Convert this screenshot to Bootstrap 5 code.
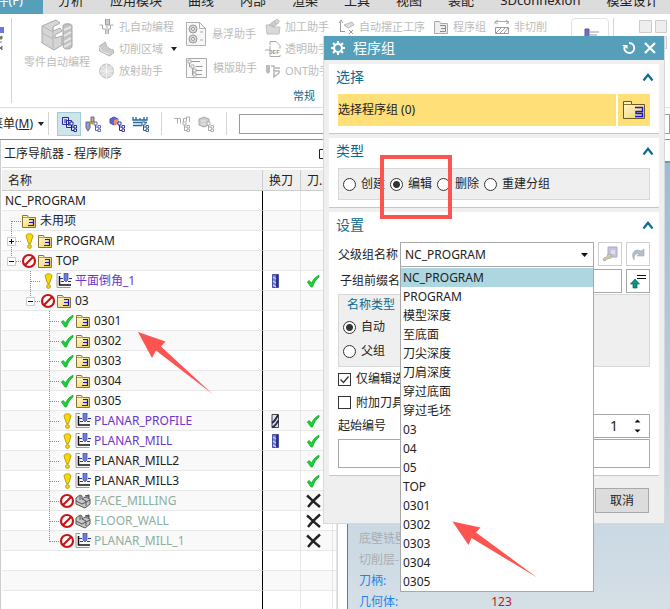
<!DOCTYPE html>
<html lang="zh-CN">
<head>
<meta charset="utf-8">
<meta name="viewport" content="width=device-width, initial-scale=1">
<title>程序组</title>
<link href="https://cdn.jsdelivr.net/npm/bootstrap@5.3.0/dist/css/bootstrap.min.css" rel="stylesheet">
<style>
body{font:12px/20px "Noto Sans","Noto Sans CJK SC",sans-serif;color:#222;background:#fff;height:100vh;overflow:hidden}
svg{display:block;flex:none}
button,input,select{font:inherit;color:inherit}
.tabs{height:14px;background:#dcdcdc;font-size:13px;overflow:hidden}
.tabs a{color:#222;text-decoration:none;line-height:18px;margin-top:-9px;flex:none}
.tabs .file-tab{width:43px;height:24px;background:#559fba;color:#fff;padding-right:20px;text-align:right;overflow:hidden;white-space:nowrap;direction:rtl}
.tabs .tab-set{gap:26px;padding-left:15px}
.ribbon{height:94px;border-bottom:1px solid #dcdcdc;font-size:11px;color:#bbb;overflow:hidden}
.ribbon button,.tools button{background:none;border:0;padding:0;display:flex;align-items:center;white-space:nowrap;flex:none}
.ribbon .rcol{flex:none;display:flex;flex-direction:column;padding-top:2px}
.ribbon .rcol button{height:22px;gap:4px}
.ribbon .rcol.tall{padding-top:3px}
.ribbon .rcol.tall button{height:34px;gap:6px}
.vline{width:1px;background:#d5d5d5;flex:none}
.grp-name{color:#0b6388;line-height:16px;padding:6px 0 0 28px}
.tools{height:32px;border-bottom:1px solid #8a8f92;overflow:hidden}
.tools .menu-btn{width:44px;justify-content:flex-end;gap:5px}
.tools .tb{width:24px;height:24px;justify-content:center}
.tools .tb.on{background:#cde6ec;border:1px solid #a3ccd6}
.tools input{height:20px;border:1px solid #999;flex:1;min-width:0}
.navigator{width:338px;flex:none;border-left:1px solid #ccc;border-right:1px solid #d5d5d5;overflow:hidden;padding-left:1px}
.nav-title{height:28px;line-height:30px;padding-left:2px;padding-right:8px;border-bottom:1px solid #d5d5d5;margin-bottom:2px}
.tree{width:100%;table-layout:fixed;border-collapse:separate;border-spacing:0;line-height:19px}
.tree th{font-weight:400;background:#efefef;height:21px;border-bottom:1px solid #ccc;border-right:1px solid #ccc;padding:0 6px;white-space:nowrap;overflow:hidden}
.tree td{height:20px;padding:0;border-bottom:1px solid #e8e8e8;border-right:1px solid #e5e5e5;white-space:nowrap;overflow:hidden}
.tree td:first-child{border-right:1px solid #000}
.tree tbody tr:nth-child(even) td{background:#f9f9f9}
.tree .cell{display:flex;align-items:center;height:19px}
.tree .cell span{padding-left:3px}
.tree td>svg{margin-left:4px}
.purple{color:#6a35c9}.muted-op{color:#8cae9d}
.view{border-left:1px solid #777;border-top:2px solid #559fba;margin:21px 0 0 9px;background:linear-gradient(#99bcd8,#d5dfe6);padding:365px 0 0 11px;line-height:21px;overflow:hidden}
.view .dim{color:#a9adb0}.view .blue{color:#1f83ee}.view .red{color:#c01524;padding-left:93px}
.dlg{position:absolute;left:323px;right:5px;top:36px;background:#efefef;border:1px solid #d8d8d8;border-top:0;z-index:2}
.dlg-head{height:24px;background:#559fba;color:#fff;font-size:14px;padding:0 8px 0 7px;gap:8px}
.dlg-head button{background:none;border:0;padding:0}
.sect{background:#fff;margin:4px 5px 0;padding:0 9px 7px;border-bottom:1px solid #c6c6c6}
.sect-title{height:30px;color:#0b6a90;font-size:14px;line-height:20px;margin:0 -5px 0 -2px;padding:0 1px 5px 0}
.pick{background:#ffdf77;height:32px;line-height:32px;flex:1;border:0;padding:0;text-align:left}
.pick-btn{background:#ffdf77;border:0;width:32px;padding:0;display:flex;align-items:center;justify-content:center}
.box{background:#efefef;border:1px solid #d8d8d8}
.dlg label{white-space:nowrap;display:flex;align-items:center;gap:5px}
.dlg input[type=radio]{appearance:none;width:13px;height:13px;margin:0;border:1px solid #333;border-radius:50%;background:#fff;flex:none}
.dlg input[type=radio]:checked{background:radial-gradient(circle,#333 0 3px,#fff 4px)}
.dlg input[type=checkbox]{appearance:none;width:13px;height:13px;margin:0;border:1px solid #333;background:#fff;flex:none}
.dlg input[type=checkbox]:checked{background:#fff url("data:image/svg+xml,%3Csvg xmlns='http://www.w3.org/2000/svg' viewBox='0 0 11 11'%3E%3Cpath d='M1.5 5.5l3 3 5-6' fill='none' stroke='%23333' stroke-width='1.3'/%3E%3C/svg%3E")}
.field{border:1px solid #a8a8a8;background:#fff;padding:0 4px;border-radius:0;min-width:0}
select.field{appearance:none;height:25px;width:194px;background:#fff url("data:image/svg+xml,%3Csvg xmlns='http://www.w3.org/2000/svg' width='7' height='4'%3E%3Cpath d='M0 0h7L3.5 4z' fill='%23111'/%3E%3C/svg%3E") no-repeat right 5px center}
.sq{width:24px;height:24px;padding:0;background:#fff;border:1px solid #d0d0d0;display:flex;align-items:center;justify-content:center;flex:none}
.field-label{width:62px;flex:none}
.clip-label{width:62px;overflow:hidden}
.popup{position:absolute;left:62px;top:24px;width:194px;background:#fff;border:1px solid #a8a8a8;padding:1px 0 0;margin:0;list-style:none;z-index:3}
.popup li{height:19px;line-height:19px;padding-left:2px}
.popup .active{background:#aed6e0}
.dlg-foot{padding:12px 15px 10px}
.dlg-foot button{width:54px;height:25px;background:#dcdcdc;border:1px solid #a8a8a8;padding:0}
.annot{position:absolute;z-index:5;pointer-events:none}
.mark-box{left:380px;top:155px;width:72px;height:64px;border:4px solid #fd5451}
.arrow-a{left:138px;top:332px}.arrow-b{left:452px;top:521px}
</style>
<script src="https://cdn.jsdelivr.net/npm/bootstrap@5.3.0/dist/js/bootstrap.bundle.min.js"></script>
</head>
<body class="d-flex flex-column position-relative">
<svg width="0" height="0" class="position-absolute" aria-hidden="true">
<defs><linearGradient id="gold" x1="0" y1="0" x2="1" y2="1"><stop offset="0" stop-color="#fffbe0"/><stop offset="1" stop-color="#edcf55"/></linearGradient></defs>
<symbol id="folder" viewBox="0 0 16 16"><path d="M1.5 14.500V2.500h5l1 2h7v10z" fill="url(#gold)" stroke="#8a7430"/><path d="M2 4.500h6" stroke="#b8a050"/><path d="M8 6.500h4.500v3H9m3.500 0v3H7M8 9.500h4" fill="none" stroke="#1414d8" stroke-width="1.200"/></symbol>
<symbol id="folderbig" viewBox="0 0 22 18"><path d="M.5 17.500V.5h8v3h13v14z" fill="url(#gold)" stroke="#6a5a20"/><path d="M1 3.500h8" stroke="#8a7430"/><path d="M12 6.500h7.500v4H13v2h6.500v3H12" fill="none" stroke="#1414e8" stroke-width="1.400"/></symbol>
<symbol id="folderg" viewBox="0 0 16 16"><path d="M1.500 14.500V2.500h5l1 2h7v10z" fill="#eee" stroke="#aaa"/><path d="M7 6.500h5.500v6H7M8 9.500h4.500" fill="none" stroke="#888"/></symbol>
<symbol id="excl" viewBox="0 0 16 16"><path d="M5 3c0-3 7-3 7 0L9.500 10.500h-2z" fill="#f5d90a" stroke="#a88b00" stroke-width=".8"/><circle cx="8.500" cy="13.500" r="1.900" fill="#f5d90a" stroke="#a88b00" stroke-width=".8"/></symbol>
<symbol id="stop" viewBox="0 0 16 16"><circle cx="8" cy="8" r="6" fill="#fff" stroke="#c81414" stroke-width="2.200"/><path d="M4 12l8-8" stroke="#c81414" stroke-width="2.200"/></symbol>
<symbol id="check" viewBox="0 0 16 16"><path d="M2.300 9l2-1.500L6.500 10C8.500 6 11 3.500 14 2.300V4C11 6.500 9 9.500 7.500 14H6z" fill="#12d633" stroke="#129a28" stroke-width=".7"/></symbol>
<symbol id="cross" viewBox="0 0 16 16"><path d="M2 2.500C6 6 10 10 15 14M15 1.500C10 6 6 10 3 14" fill="none" stroke="#222" stroke-width="2.400"/></symbol>
<symbol id="op" viewBox="0 0 16 16"><path d="M5 .5H1v14h13.500" fill="none" stroke="#999"/><path d="M3.500 3v9h11.500" fill="none" stroke="#111" stroke-width="1.500"/><path d="M8 0h4v7l-2 2-2-2z" fill="#6f7fd8" stroke="#2b3590" stroke-width=".6"/><path d="M4 5.500h3m6 0h3M5 8.500h3m4 0h3" stroke="#2030c0"/></symbol>
<symbol id="mill" viewBox="0 0 16 16"><path d="M1 5l4-3 2 1v3l3-2 5 2v5l-5 4-9-4z" fill="#c8c8c8" stroke="#555"/><path d="M1 8l6 3 8-4M7 6l4 2v5M5 3v4" fill="none" stroke="#555"/><path d="M10 3l4-1v3" fill="#777" stroke="#444"/></symbol>
<symbol id="tool" viewBox="0 0 16 16"><path d="M5.500 1.500h6v13h-6z" fill="#6f7ddd" stroke="#4a50a0"/><path d="M10 2v12" stroke="#2a2f80" stroke-width="2"/><path d="M6 4l3 2M6 8l3 2M6 12l3 2" stroke="#c8cef8" stroke-width="1.200"/></symbol>
<symbol id="tool2" viewBox="0 0 16 16"><path d="M5 1.500h6.500v13H5z" fill="#dfe3f2" stroke="#444"/><path d="M5 10c3-2 4-4 6-8M5 14.500c2-1 5-4 6-7" fill="none" stroke="#222845" stroke-width="1.800"/></symbol>
<symbol id="gf" viewBox="0 0 19 20"><path d="M9.500 10v10M10 10.500h9" stroke="#888" stroke-dasharray="1 1"/></symbol>
<symbol id="gt" viewBox="0 0 19 20"><path d="M9.500 0v20M10 10.500h9" stroke="#888" stroke-dasharray="1 1"/></symbol>
<symbol id="gl" viewBox="0 0 19 20"><path d="M9.500 0v11M10 10.500h9" stroke="#888" stroke-dasharray="1 1"/></symbol>
<symbol id="gp" viewBox="0 0 19 20"><path d="M9.500 0v20M14 10.500h5" stroke="#888" stroke-dasharray="1 1"/><path d="M5.500 6.500h8v8h-8z" fill="#fff" stroke="#ccc"/><path d="M7 10.500h5M9.500 8v5" stroke="#111"/></symbol>
<symbol id="gm" viewBox="0 0 19 20"><path d="M9.500 0v6M14 10.500h5" stroke="#888" stroke-dasharray="1 1"/><path d="M5.500 6.500h8v8h-8z" fill="#fff" stroke="#ccc"/><path d="M7 10.500h5" stroke="#111"/></symbol>
<symbol id="up" viewBox="0 0 12 8"><path d="M1.500 7.500L6 1.800l4.500 5.700" fill="none" stroke="#0b6a90" stroke-width="2.200"/></symbol>
<symbol id="subtree" viewBox="0 0 16 16"><path d="M10.500 8v6.500h3M10.500 11h3" fill="none" stroke="currentColor"/><path d="M9 6h3v3H9zM13 9.500h2.500V12H13zM13 13h2.500v2.500H13z" fill="#fff" stroke="currentColor" stroke-width=".9"/></symbol>
</svg>

<nav class="tabs d-flex flex-shrink-0">
<a href="#" class="file-tab">文件(F)&lrm;</a>
<div class="tab-set d-flex"><a href="#">分析</a><a href="#">应用模块</a><a href="#">曲线</a><a href="#">内部</a><a href="#">渲染</a><a href="#">工具</a><a href="#">视图</a><a href="#">装配</a><a href="#">3Dconnexion</a><a href="#">模型设计</a></div>
</nav>

<div class="ribbon d-flex flex-shrink-0">
<svg width="7" height="34" class="mt-2" viewBox="0 0 7 34"><path d="M0 5h4v6H0z" fill="#6878e0"/><path d="M0 15l2-1v3H0zM0 20h2M0 26l2-2v4z" stroke="#777" fill="#777"/></svg>
<div class="vline ms-1 my-1 me-2"></div>
<button class="flex-column ms-1 pt-1 align-self-start"><svg width="34" height="34" viewBox="0 0 34 34"><path d="M2 8L16 2l4 3-7 4v4l7-3 2 3-7 4v3l7-2v9l-8 5L2 25z" fill="#d5d5d5" stroke="#aaa"/><path d="M2 8l11 6M2 15l11 6M13 10v20" stroke="#b5b5b5"/><path d="M23 8c0-3 9-3 9 0v20c0 4-9 4-9 0z" fill="#c2c2c2" stroke="#a5a5a5"/><path d="M24 12l7-3M24 18l7-4M24 24l7-4M24 29l7-4" stroke="#e8e8e8" stroke-width="2"/></svg><span>零件自动编程</span></button>
<div class="rcol ms-2">
<button><svg width="17" height="16" viewBox="0 0 16 16"><path d="M7 0h4v6H7z" fill="#ccc" stroke="#999"/><path d="M1 6h3v4h3v5m8-9h-3v4h-2v5M8.500 7v8" fill="none" stroke="#aaa"/></svg>孔自动编程</button>
<button><svg width="17" height="16" viewBox="0 0 16 16"><path d="M1 5l6-4c1 5 3 7 8 8v3l-4 3L1 10z" fill="#ccc" stroke="#b5b5b5"/><path d="M1 6c2 5 5 6 10 7" stroke="#eee" fill="none"/></svg>切削区域<svg width="7" height="4" class="ms-1" viewBox="0 0 7 4"><path d="M0 0h6L3 4z" fill="#222"/></svg></button>
<button><svg width="17" height="16" viewBox="0 0 16 16"><circle cx="8" cy="8" r="7" fill="#dcdcdc" stroke="#c0c0c0"/><path d="M3 13L13 3M3 3l10 10M8 1v14M1 8h14" stroke="#f5f5f5"/></svg>放射助手</button>
</div>
<div class="rcol tall ms-2">
<button><svg width="20" height="24" viewBox="0 0 20 24"><path d="M.5.5h13l6 6v17H.5z" fill="#f8f8f8" stroke="#b0b0b0"/><path d="M13.500.5v6h6" fill="none" stroke="#b0b0b0"/><circle cx="7" cy="7" r="4" fill="#d8d8d8" stroke="#999"/><circle cx="7" cy="7" r="1.500" fill="#fff" stroke="#999"/><circle cx="7" cy="17" r="4" fill="#d8d8d8" stroke="#999"/><circle cx="7" cy="17" r="1.500" fill="#fff" stroke="#999"/><path d="M14 10h3M14 18h3" stroke="#aaa"/></svg>悬浮助手</button>
<button><svg width="21" height="20" viewBox="0 0 21 20"><path d="M.5.500h20v19H.5z" fill="#fafafa" stroke="#aaa"/><path d="M3.500 2v7M5 3.500h9M5 8.500h3M9.500 8.500h7M6.500 9v8M8 12.500h8M8 16.500h8" stroke="#999" fill="none"/><path d="M2 2h3v3H2zM5 7h3v3H5zM7 11h3v3H7zM7 15h3v3H7z" fill="#fff" stroke="#aaa"/></svg>模版助手</button>
</div>
<div class="rcol ms-2">
<button><svg width="16" height="16" viewBox="0 0 16 16"><path d="M1 6h4l2 2h8l-1 7H2z" fill="#dadada" stroke="#c0c0c0"/><path d="M4 6l5-4 5 1-5 5z" fill="#ccc" stroke="#bbb"/><circle cx="12" cy="2.500" r="2" fill="#ddd" stroke="#bbb"/></svg>加工助手</button>
<button><svg width="16" height="16" viewBox="0 0 16 16"><path d="M5 4V.5h6l4 4v3M5 13v2.500h10V14M0 9h5V5" fill="none" stroke="#aaa"/><text x="4" y="13" font-size="6" font-family="Liberation Mono" font-weight="700" fill="#999">DEF</text></svg>透明助手</button>
<button><svg width="16" height="16" viewBox="0 0 16 16"><path d="M1 2h4v7l-2 2-2-2z" fill="#bbb"/><path d="M6 3h3v5M10 5h5M8 8h6v2l-5 4V9" fill="none" stroke="#b5b5b5" stroke-width="1.500"/></svg>ONT助手</button>
<div class="grp-name">常规</div>
</div>
<div class="rcol ms-2"><button><svg width="17" height="16" viewBox="0 0 17 16"><path d="M2.500 13V3M1 4l2-3 2 3M3 12.500h4M11 11l4 4m0-4l-4 4" fill="none" stroke="#999"/><path d="M6 6l8-3 2 3-6 3z" fill="#ddd" stroke="#bbb"/></svg>自动摆正工序</button></div>
<div class="rcol ms-2"><button><svg width="16" height="16"><use href="#folderg"/></svg>程序组</button></div>
<div class="rcol ms-2"><button><svg width="16" height="16" viewBox="0 0 16 16"><path d="M1 5V2.500h13V5M12 1l3 2-3 2M4 1L1 3l3 2" fill="none" stroke="#aaa"/><path d="M1.500 8.500h13v6h-13z" fill="#fff" stroke="#999"/><path d="M2 14l5-5m-1 5l5-5m-1 5l4-5" stroke="#999"/></svg>非切削</button></div>
<div class="border rounded-1 ms-4 mt-1 px-2 pt-2"><svg width="20" height="18" viewBox="0 0 20 18"><path d="M5 2h4v11l-2 3-2-3z" fill="#7072c8" stroke="#555a90"/><path d="M10 8h7M10 5h9" stroke="#999"/></svg></div>
<div class="vline ms-1 my-1"></div>
<svg class="ms-4 mt-1" width="29" height="32" viewBox="0 0 29 32"><path d="M1.500 2.500h12v12h-12zM17.500 2.500h11v12h-11zM17.500 18.500h11v12h-11z" fill="#eee" stroke="#ccc"/></svg>
</div>

<div class="tools d-flex align-items-center flex-shrink-0">
<button class="menu-btn"><span>菜单(<u>M</u>)</span><svg width="6" height="4" viewBox="0 0 6 4"><path d="M0 0h6L3 4z" fill="#222"/></svg></button>
<div class="vline ms-1 align-self-stretch my-1 me-2"></div>
<button class="tb on" aria-label="程序顺序视图"><svg width="16" height="16" color="#15158a"><path d="M1.500 1.500h6v7h-6zM5.500 4.500h5v7h-5z" fill="#d8e4ff" stroke="#26269a"/><path d="M3 4h3M3 6h2M7 7h2M7 9h2" stroke="#26269a"/><use href="#subtree"/></svg></button>
<button class="tb" aria-label="机床视图"><svg width="16" height="16" color="#5560b0"><path d="M6 1h3v5H6z" fill="#caa" stroke="#666"/><path d="M1 6h4v6l-2 3-2-3z" fill="#8d9fd8" stroke="#667"/><path d="M5 6l3 2" stroke="#c90" stroke-width="2"/><use href="#subtree"/></svg></button>
<button class="tb" aria-label="几何视图"><svg width="16" height="16" color="#2a2a90"><path d="M1 3l4-2 4 2v4L5 9 1 7z" fill="#5868d8" stroke="#4450a8"/><path d="M5 4l4-1v4L5 9z" fill="#f09070"/><use href="#subtree"/></svg></button>
<button class="tb" aria-label="加工方法视图"><svg width="18" height="16" color="#2a5a90"><path d="M1 1v3h14V1M1 6.500h14M1 9.500h9M4 4V1m4 3V2m4 2V1" fill="none" stroke="#26689a" stroke-width="1.300"/><use href="#subtree"/></svg></button>
<div class="vline ms-2 align-self-stretch my-1 me-2"></div>
<button class="tb" aria-label="查找"><svg width="16" height="16" color="#aaa"><path d="M0 2.500h3.500v5m0-5h3v5m3 0v-5h3m0 3V1h3v5" fill="none" stroke="#aaa"/><use href="#subtree"/></svg></button>
<button class="tb" aria-label="对象"><svg width="16" height="16" color="#aaa"><path d="M1 3l5-2 5 2v6l-5 2-5-2z" fill="#ccc" stroke="#aaa"/><path d="M3 5h5M3 8h5" stroke="#eee"/><use href="#subtree"/></svg></button>
<div class="vline ms-2 align-self-stretch my-1 me-2"></div>
<input type="text" class="ms-1" aria-label="命令查找器">
</div>

<div class="d-flex flex-grow-1 overflow-hidden">
<section class="navigator">
<div class="nav-title d-flex justify-content-between align-items-center"><span>工序导航器 - 程序顺序</span><svg width="10" height="10" viewBox="0 0 10 10"><path d="M.5.5h9v9h-9z" fill="none" stroke="#222"/></svg></div>
<table class="tree">
<colgroup><col><col style="width:38px"><col style="width:32px"><col style="width:4px"></colgroup>
<thead><tr><th>名称</th><th>换刀</th><th>刀...</th><th class="p-0"></th></tr></thead>
<tbody>
<tr><td><div class="cell"><span>NC_PROGRAM</span></div></td><td></td><td></td><td></td></tr>
<tr><td><div class="cell"><svg width="19" height="20"><use href="#gf"/></svg><svg width="16" height="16"><use href="#folder"/></svg><span>未用项</span></div></td><td></td><td></td><td></td></tr>
<tr><td><div class="cell"><svg width="19" height="20"><use href="#gp"/></svg><svg width="16" height="16"><use href="#excl"/></svg><svg width="16" height="16"><use href="#folder"/></svg><span>PROGRAM</span></div></td><td></td><td></td><td></td></tr>
<tr><td><div class="cell"><svg width="19" height="20"><use href="#gm"/></svg><svg width="16" height="16"><use href="#stop"/></svg><svg width="16" height="16"><use href="#folder"/></svg><span>TOP</span></div></td><td></td><td></td><td></td></tr>
<tr><td><div class="cell"><svg width="19" height="20"></svg><svg width="19" height="20"><use href="#gt"/></svg><svg width="16" height="16"><use href="#excl"/></svg><svg width="16" height="16"><use href="#op"/></svg><span class="purple">平面倒角_1</span></div></td><td><svg width="16" height="16"><use href="#tool"/></svg></td><td><svg width="16" height="16"><use href="#check"/></svg></td><td></td></tr>
<tr><td><div class="cell"><svg width="19" height="20"></svg><svg width="19" height="20"><use href="#gm"/></svg><svg width="16" height="16"><use href="#stop"/></svg><svg width="16" height="16"><use href="#folder"/></svg><span>03</span></div></td><td></td><td></td><td></td></tr>
<tr><td><div class="cell"><svg width="38" height="20"></svg><svg width="19" height="20"><use href="#gt"/></svg><svg width="16" height="16"><use href="#check"/></svg><svg width="16" height="16"><use href="#folder"/></svg><span>0301</span></div></td><td></td><td></td><td></td></tr>
<tr><td><div class="cell"><svg width="38" height="20"></svg><svg width="19" height="20"><use href="#gt"/></svg><svg width="16" height="16"><use href="#check"/></svg><svg width="16" height="16"><use href="#folder"/></svg><span>0302</span></div></td><td></td><td></td><td></td></tr>
<tr><td><div class="cell"><svg width="38" height="20"></svg><svg width="19" height="20"><use href="#gt"/></svg><svg width="16" height="16"><use href="#check"/></svg><svg width="16" height="16"><use href="#folder"/></svg><span>0303</span></div></td><td></td><td></td><td></td></tr>
<tr><td><div class="cell"><svg width="38" height="20"></svg><svg width="19" height="20"><use href="#gt"/></svg><svg width="16" height="16"><use href="#check"/></svg><svg width="16" height="16"><use href="#folder"/></svg><span>0304</span></div></td><td></td><td></td><td></td></tr>
<tr><td><div class="cell"><svg width="38" height="20"></svg><svg width="19" height="20"><use href="#gt"/></svg><svg width="16" height="16"><use href="#check"/></svg><svg width="16" height="16"><use href="#folder"/></svg><span>0305</span></div></td><td></td><td></td><td></td></tr>
<tr><td><div class="cell"><svg width="38" height="20"></svg><svg width="19" height="20"><use href="#gt"/></svg><svg width="16" height="16"><use href="#excl"/></svg><svg width="16" height="16"><use href="#op"/></svg><span class="purple">PLANAR_PROFILE</span></div></td><td><svg width="16" height="16"><use href="#tool2"/></svg></td><td><svg width="16" height="16"><use href="#check"/></svg></td><td></td></tr>
<tr><td><div class="cell"><svg width="38" height="20"></svg><svg width="19" height="20"><use href="#gt"/></svg><svg width="16" height="16"><use href="#excl"/></svg><svg width="16" height="16"><use href="#op"/></svg><span class="purple">PLANAR_MILL</span></div></td><td><svg width="16" height="16"><use href="#tool"/></svg></td><td><svg width="16" height="16"><use href="#check"/></svg></td><td></td></tr>
<tr><td><div class="cell"><svg width="38" height="20"></svg><svg width="19" height="20"><use href="#gt"/></svg><svg width="16" height="16"><use href="#excl"/></svg><svg width="16" height="16"><use href="#op"/></svg><span>PLANAR_MILL2</span></div></td><td></td><td><svg width="16" height="16"><use href="#check"/></svg></td><td></td></tr>
<tr><td><div class="cell"><svg width="38" height="20"></svg><svg width="19" height="20"><use href="#gt"/></svg><svg width="16" height="16"><use href="#excl"/></svg><svg width="16" height="16"><use href="#op"/></svg><span>PLANAR_MILL3</span></div></td><td></td><td><svg width="16" height="16"><use href="#check"/></svg></td><td></td></tr>
<tr><td><div class="cell"><svg width="38" height="20"></svg><svg width="19" height="20"><use href="#gt"/></svg><svg width="16" height="16"><use href="#stop"/></svg><svg width="16" height="16"><use href="#mill"/></svg><span class="muted-op">FACE_MILLING</span></div></td><td></td><td><svg width="16" height="16"><use href="#cross"/></svg></td><td></td></tr>
<tr><td><div class="cell"><svg width="38" height="20"></svg><svg width="19" height="20"><use href="#gt"/></svg><svg width="16" height="16"><use href="#stop"/></svg><svg width="16" height="16"><use href="#mill"/></svg><span class="muted-op">FLOOR_WALL</span></div></td><td></td><td><svg width="16" height="16"><use href="#cross"/></svg></td><td></td></tr>
<tr><td><div class="cell"><svg width="38" height="20"></svg><svg width="19" height="20"><use href="#gl"/></svg><svg width="16" height="16"><use href="#stop"/></svg><svg width="16" height="16"><use href="#op"/></svg><span class="muted-op">PLANAR_MILL_1</span></div></td><td></td><td><svg width="16" height="16"><use href="#cross"/></svg></td><td></td></tr>
<tr><td></td><td></td><td></td><td></td></tr>
<tr><td></td><td></td><td></td><td></td></tr>
<tr><td></td><td></td><td></td><td></td></tr>
</tbody></table>
</section>
<section class="view flex-grow-1">
<div class="dim">底壁铣壁</div><div class="dim">切削层-</div><div class="blue">刀柄:</div><div><span class="blue">几何体:</span><span class="red">123</span></div>
</section>
</div>

<div class="dlg" role="dialog" aria-label="程序组">
<div class="dlg-head d-flex align-items-center">
<svg width="14" height="14" viewBox="0 0 14 14"><circle cx="7" cy="7" r="4" fill="none" stroke="#fff" stroke-width="2.200"/><path d="M7 0v2.500M7 11.500V14M0 7h2.500M11.500 7H14M2 2l2 2M10 10l2 2M12 2l-2 2M4 10l-2 2" stroke="#fff" stroke-width="2.200"/></svg>
<span class="me-auto">程序组</span>
<button aria-label="重置"><svg width="14" height="14" viewBox="0 0 14 14"><path d="M2.500 5.500A5 5 0 1 0 7 2" fill="none" stroke="#fff" stroke-width="1.800"/><path d="M0 4h5.500v4z" fill="#fff"/></svg></button>
<button aria-label="关闭"><svg width="12" height="12" viewBox="0 0 12 12"><path d="M1 1l10 10M11 1L1 11" stroke="#fff" stroke-width="2.200"/></svg></button>
</div>
<div class="sect">
<div class="sect-title d-flex justify-content-between align-items-center">选择<svg width="12" height="8"><use href="#up"/></svg></div>
<div class="d-flex" style="gap:2px"><button class="pick">选择程序组 (0)</button><button class="pick-btn" aria-label="程序组"><svg width="22" height="18"><use href="#folderbig"/></svg></button></div>
</div>
<div class="sect">
<div class="sect-title d-flex justify-content-between align-items-center">类型<svg width="12" height="8"><use href="#up"/></svg></div>
<div class="box d-flex align-items-center ps-1" style="gap:5px;height:32px">
<label><input type="radio" name="kind">创建</label><label><input type="radio" name="kind" checked>编辑</label><label><input type="radio" name="kind">删除</label><label><input type="radio" name="kind">重建分组</label></div>
</div>
<div class="sect">
<div class="sect-title d-flex justify-content-between align-items-center">设置<svg width="12" height="8"><use href="#up"/></svg></div>
<div class="position-relative">
<div class="d-flex gap-1"><div class="d-flex flex-grow-1"><label class="field-label" for="parent">父级组名称</label><select id="parent" class="field flex-grow-1"><option>NC_PROGRAM</option></select></div>
<button class="sq" aria-label="选择" disabled><svg width="16" height="16" viewBox="0 0 16 16"><path d="M6 1h9v10H6z" fill="#c4c4e2" stroke="#aaaac8"/><path d="M9 4h4v4H9z" fill="#dedeee"/><path d="M1 14l1-2 3-1 1-3 4 1-1 3-4 1-2 2z" fill="#d0cba8" stroke="#b5b298"/></svg></button>
<button class="sq" aria-label="重做" disabled><svg width="14" height="14" viewBox="0 0 14 14"><path d="M3 13C-1 6 4 1 10 4l3-2v7H6l2-2C5 6 3 8 3 13z" fill="#b5bccb" stroke="#a5adbf" stroke-width=".6"/></svg></button></div>
<div class="d-flex gap-1" style="margin-top:2px"><div class="d-flex flex-grow-1"><label class="field-label" for="prefix" style="padding-left:2px">子组前缀名</label><input id="prefix" type="text" class="field flex-grow-1"></div>
<button class="sq" style="border-color:#a8a8a8" aria-label="上移"><svg width="16" height="16" viewBox="0 0 16 16"><path d="M7 2.500h9M7 5.500h9" stroke="#111"/><path d="M5 6l4.500 5H7v4H3v-4H.5z" fill="#0a9284" stroke="#06665c" stroke-width=".7"/></svg></button></div>
<ul class="popup" role="listbox">
<li class="active">NC_PROGRAM</li><li>PROGRAM</li><li>模型深度</li><li>至底面</li><li>刀尖深度</li><li>刀肩深度</li><li>穿过底面</li><li>穿过毛坯</li><li>03</li><li>04</li><li>05</li><li>TOP</li><li>0301</li><li>0302</li><li>0303</li><li>0304</li><li>0305</li></ul>
</div>
<div class="box ps-1" style="margin-top:1px;height:73px"><div class="ps-1" style="color:#0b6a90">名称类型</div><label style="height:24px"><input type="radio" name="nm" checked>自动</label><label style="height:24px"><input type="radio" name="nm">父组</label></div>
<label class="clip-label" style="height:24px"><input type="checkbox" checked>仅编辑选</label>
<label class="clip-label" style="height:23px"><input type="checkbox">附加刀具</label>
<div class="d-flex align-items-center"><label class="field-label" for="start">起始编号</label><div class="field d-flex align-items-center flex-grow-1" style="height:24px"><input id="start" class="border-0 p-0 text-end flex-grow-1" style="min-width:0;font-size:14px" value="1"><svg width="7" height="14" class="ms-3 me-1" viewBox="0 0 7 14"><path d="M.5 3.500h6L3.500.5zM.5 10.500h6l-3 3z" fill="#111"/></svg></div></div>
<input type="text" class="field w-100 d-block" style="height:29px;margin-top:1px" aria-label="预览">
</div>
<div class="dlg-foot d-flex justify-content-end"><button>取消</button></div>
</div>

<div class="annot mark-box"></div>
<svg class="annot arrow-a" width="76" height="64" viewBox="0 0 76 64"><path d="M0 0l27.500 9.500-4.500 5L74.500 62 18 18.500 14 26z" fill="#fd5451"/></svg>
<svg class="annot arrow-b" width="87" height="58" viewBox="0 0 87 58"><path d="M.5.500l28 6-4.500 5L85 56.500 19.500 17l-3 7z" fill="#fd5451"/></svg>
</body>
</html>
